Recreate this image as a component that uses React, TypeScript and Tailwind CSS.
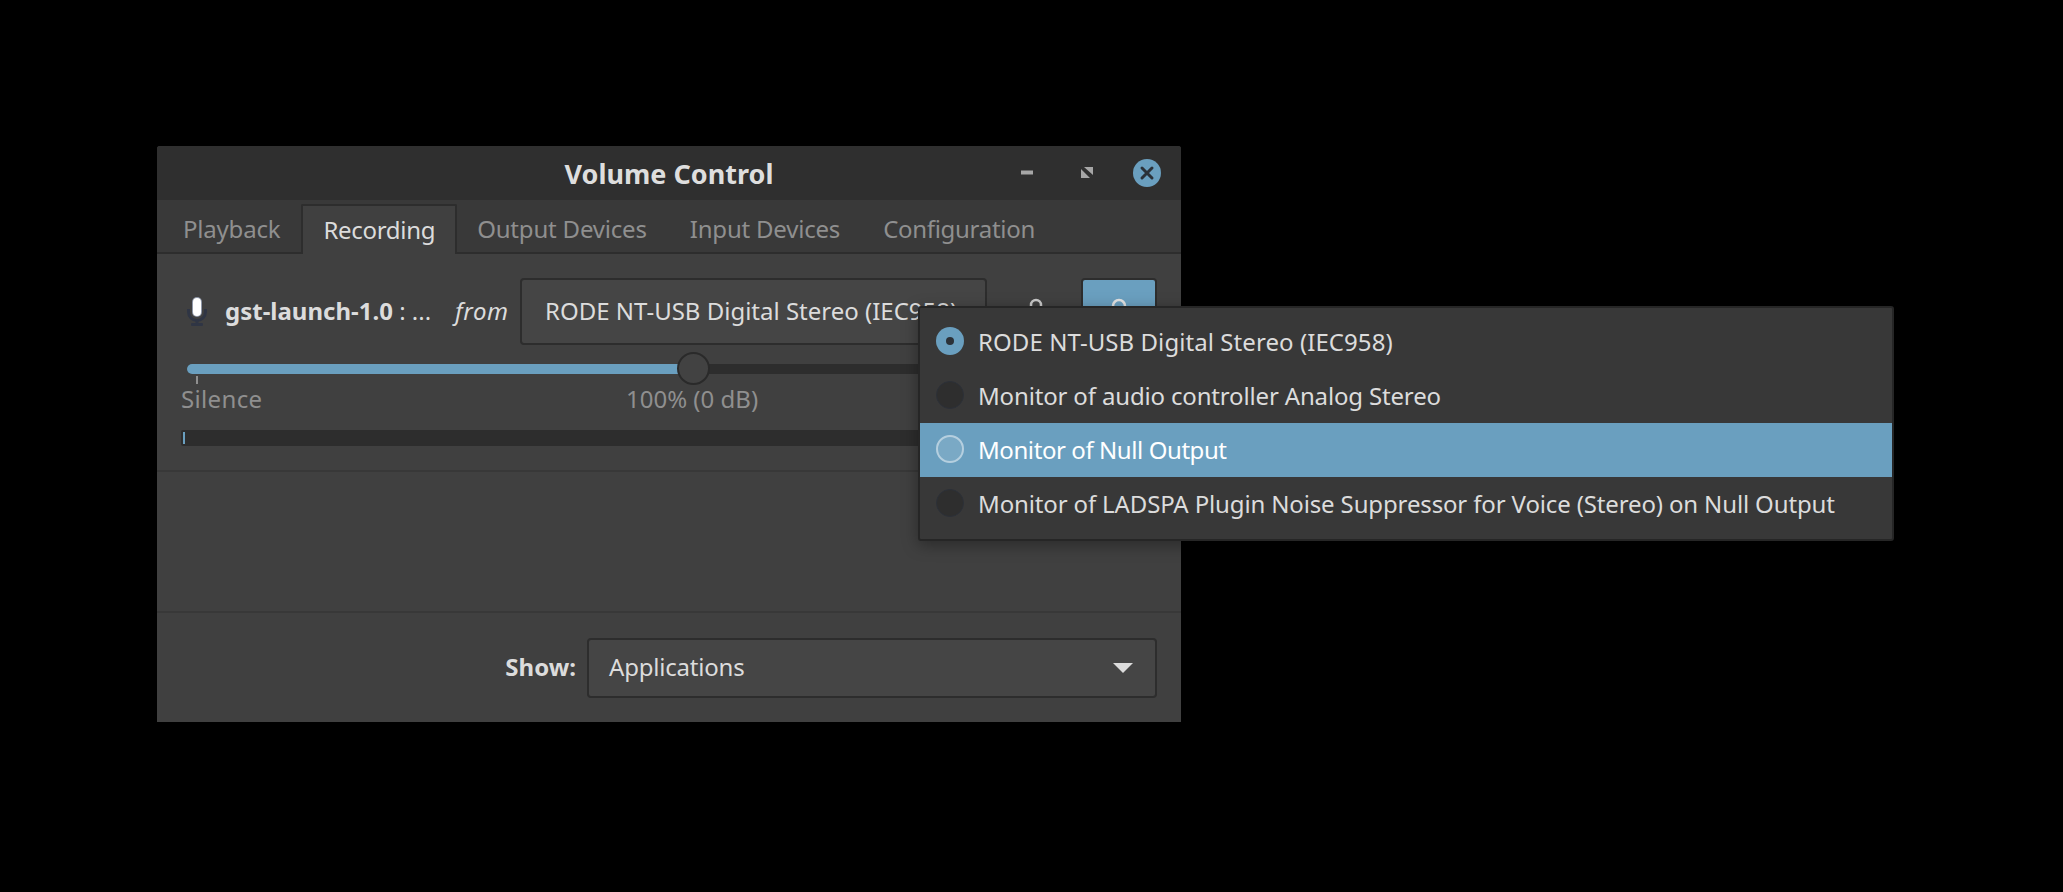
const sans = "font-['Noto_Sans',sans-serif]";

function Radio({ state }: { state: "checked" | "off" | "hover" }) {
  if (state === "checked")
    return (
      <span className="mb-[2px] flex h-[28px] w-[28px] items-center justify-center rounded-full bg-[#6a9fbf]">
        <span className="h-[8px] w-[8px] rounded-full bg-[#2b3138]" />
      </span>
    );
  if (state === "hover")
    return <span className="mb-[2px] h-[28px] w-[28px] rounded-full border-2 border-[#b5cfdf] bg-[#7aa9c5]" />;
  return <span className="mb-[2px] h-[28px] w-[28px] rounded-full border border-[#2c3038] bg-[#2e2e2e]" />;
}

function MenuRow({ label, state, track }: { label: string; state: "checked" | "off" | "hover"; track: string }) {
  const hot = state === "hover";
  return (
    <div className={`flex h-[54px] items-center gap-[14px] pl-[16px] ${hot ? "bg-[#6a9fbf] text-white" : "text-[#dcdcdc]"}`}>
      <Radio state={state} />
      <span className={track}>{label}</span>
    </div>
  );
}

function Mic() {
  return (
    <svg width="24" height="32" viewBox="0 0 24 32" className="ml-[4px] shrink-0">
      <path d="M3.5 13v3a8.5 8.5 0 0 0 17 0v-3" fill="none" stroke="#2f3544" strokeWidth="3" />
      <rect x="10.5" y="23" width="3" height="5" fill="#2f3544" />
      <rect x="6" y="27" width="12" height="3" rx="1" fill="#2f3544" />
      <rect x="7" y="1" width="10" height="20" rx="5" fill="#8f97a8" />
      <rect x="8" y="2" width="8" height="18" rx="4" fill="#ffffff" />
    </svg>
  );
}

export default function App() {
  const tabs = [
    { t: "Playback", c: "tracking-[-0.2px] px-[21px]" },
    { t: "Recording", c: "tracking-[-0.3px] px-[20px]" },
    { t: "Output Devices", c: "tracking-[-0.19px] pl-[20px] pr-[22px]" },
    { t: "Input Devices", c: "tracking-[-0.2px] pl-[21px] pr-[22px]" },
    { t: "Configuration", c: "tracking-[-0.3px] px-[21px]" },
  ];
  return (
    <div className={`relative h-[892px] w-[2063px] overflow-hidden bg-black pl-[157px] pt-[146px] text-[24px] ${sans}`}>
      <div className="flex h-[576px] w-[1024px] flex-col overflow-hidden rounded-t-[3px] bg-[#404040] text-[#dcdcdc]">
        {/* Title bar */}
        <div className="relative flex h-[54px] shrink-0 items-center justify-center bg-[#2f2f2f]">
          <span className="text-[27px] font-bold leading-none text-[#dedede]">Volume Control</span>
          <div className="absolute right-[20px] top-[13px] flex items-center gap-[32px]">
            <svg width="28" height="28" viewBox="0 0 28 28">
              <rect x="8" y="11.5" width="12" height="4" fill="#a6a6a6" />
            </svg>
            <svg width="28" height="28" viewBox="0 0 28 28">
              <path d="M11 8h9v8zM8 10v9h9z" fill="#a6a6a6" />
            </svg>
            <svg width="28" height="28" viewBox="0 0 28 28">
              <circle cx="14" cy="14" r="14" fill="#6a9fbf" />
              <path d="M9 9l10 10M19 9 9 19" stroke="#2b3138" strokeWidth="3" strokeLinecap="round" />
            </svg>
          </div>
        </div>

        {/* Tabs */}
        <div className="flex h-[54px] shrink-0 items-end border-b-2 border-[#2d2d2d] bg-[#393939] pl-[5px]">
          {tabs.map(({ t, c }) =>
            t === "Recording" ? (
              <div key={t} className={`relative -mb-[2px] flex h-[50px] items-center rounded-t-[2px] border-x-2 border-t-2 border-[#2d2d2d] bg-[#404040] text-[#dcdcdc] ${c}`}>
                {t}
              </div>
            ) : (
              <div key={t} className={`flex h-[48px] items-center pt-[2px] text-[#8f8f8f] ${c}`}>
                {t}
              </div>
            ),
          )}
        </div>

        {/* Stream */}
        <div className="flex h-[218px] shrink-0 flex-col border-b-2 border-[#383838] px-[24px]">
          <div className="mt-[24px] flex h-[67px] items-center">
            <Mic />
            <span className="ml-[16px] w-[230px] whitespace-nowrap pb-[2px]">
              <span className="font-bold">gst-launch-1.0</span> : ...
            </span>
            <i className="w-[65px] pb-[2px] tracking-[0.6px]">from</i>
            <div className="flex h-[67px] w-[467px] items-center overflow-hidden rounded-[4px] border-2 border-[#2d2d2d] bg-[#454545] pb-[2px] pl-[23px] whitespace-nowrap">
              RODE NT-USB Digital Stereo (IEC958)
            </div>
            <div className="flex h-[67px] w-[94px] justify-center pl-[3px] pt-[20px]">
              <svg width="14" height="24" viewBox="0 0 14 24">
                <path d="M2 20V7a5 5 0 0 1 10 0v13" fill="none" stroke="#c9c9c9" strokeWidth="2.5" />
              </svg>
            </div>
            <div className="flex h-[67px] w-[76px] justify-center rounded-[4px] border-2 border-[#2d2d2d] bg-[#6a9fbf] pt-[18px]">
              <svg width="16" height="24" viewBox="0 0 16 24">
                <path d="M2 20V8a6 6 0 0 1 12 0v12" fill="none" stroke="#e3e3e3" strokeWidth="2.5" />
              </svg>
            </div>
          </div>

          <div className="relative ml-[6px] mt-[19px] h-[10px] rounded-full bg-[#2d2d2d]">
            <div className="h-full w-[507px] rounded-l-full bg-[#6a9fbf]" />
            <div className="absolute left-[490px] top-[-12px] h-[33px] w-[33px] rounded-full border-2 border-[#2a2a2a] bg-[#424242]" />
            <div className="absolute left-[9px] top-[12px] h-[8px] w-[2px] bg-[#8f8f8f]" />
          </div>
          <div className="relative mt-[10px] h-[30px] leading-[30px] text-[#8f8f8f]">
            <span className="absolute left-0 top-0 tracking-[0.35px]">Silence</span>
            <span className="absolute left-[445px] top-0 whitespace-nowrap">100% (0 dB)</span>
          </div>
          <div className="mt-[16px] h-[16px] rounded-[2px] bg-[#2d2d2d] pl-[2px] pt-[2px]">
            <div className="h-[12px] w-[2px] bg-[#6a9fbf]" />
          </div>
        </div>

        {/* Empty area */}
        <div className="h-[141px] shrink-0 border-b-2 border-[#383838]" />

        {/* Show */}
        <div className="flex flex-1 items-start justify-end gap-[11px] pr-[24px] pt-[25px]">
          <span className="mt-[14px] font-bold leading-[30px]">Show:</span>
          <div className="flex h-[60px] w-[570px] items-center justify-between rounded-[4px] border-2 border-[#2d2d2d] bg-[#454545] pl-[20px] pr-[22px]">
            <span className="pb-[2px] tracking-[-0.2px]">Applications</span>
            <span className="h-0 w-0 border-x-[10px] border-t-[10px] border-x-transparent border-t-[#dcdcdc]" />
          </div>
        </div>
      </div>

      {/* Popup menu */}
      <div className="absolute left-[918px] top-[306px] w-[976px] rounded-[3px] border-2 border-[#262626] bg-[#383838] pb-[8px] pt-[7px] shadow-[0_4px_16px_rgba(0,0,0,0.35)]">
        <MenuRow label="RODE NT-USB Digital Stereo (IEC958)" state="checked" track="tracking-[0.07px]" />
        <MenuRow label="Monitor of audio controller Analog Stereo" state="off" track="tracking-[-0.16px]" />
        <MenuRow label="Monitor of Null Output" state="hover" track="tracking-[-0.42px]" />
        <MenuRow label="Monitor of LADSPA Plugin Noise Suppressor for Voice (Stereo) on Null Output" state="off" track="tracking-[-0.14px]" />
      </div>
    </div>
  );
}
